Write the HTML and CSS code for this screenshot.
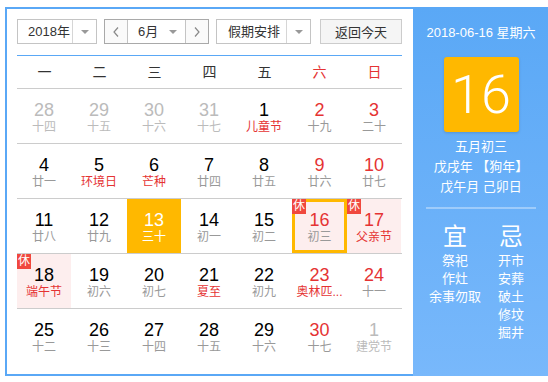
FILE: index.html
```html
<!DOCTYPE html>
<html lang="zh-CN">
<head>
    <meta charset="UTF-8">
    <title>万年历</title>
    <link rel="stylesheet" href="styles.css">
</head>
<body>

<div class="calendar">
    <div class="cal-main">
        <div class="toolbar">
            <div class="select select-year">
                <span class="select-text">2018年</span>
                <span class="select-arrow"><i class="caret"></i></span>
            </div>
            <div class="month-pick">
                <span class="month-btn">
                    <svg width="6" height="10" viewBox="0 0 6 10"><polyline points="5,0.5 1,5 5,9.5" fill="none" stroke="#888" stroke-width="1.2"/></svg>
                </span>
                <div class="month-sel">
                    <span class="select-text">6月</span>
                    <i class="caret"></i>
                </div>
                <span class="month-btn">
                    <svg width="6" height="10" viewBox="0 0 6 10"><polyline points="1,0.5 5,5 1,9.5" fill="none" stroke="#888" stroke-width="1.2"/></svg>
                </span>
            </div>
            <div class="select select-holiday">
                <span class="select-text">假期安排</span>
                <span class="select-arrow"><i class="caret"></i></span>
            </div>
            <button class="today-btn">返回今天</button>
        </div>

        <div class="week-head">
            <span>一</span><span>二</span><span>三</span><span>四</span><span>五</span>
            <span class="weekend">六</span><span class="weekend">日</span>
        </div>

        <div class="days" id="days">
            <script>
                // day, lunar text, extra classes
                let days = [
                    ["28", "十四", "other"], ["29", "十五", "other"], ["30", "十六", "other"], ["31", "十七", "other"],
                    ["1", "儿童节", "fest"], ["2", "十九", "weekend"], ["3", "二十", "weekend"],
                    ["4", "廿一", ""], ["5", "环境日", "fest"], ["6", "芒种", "fest"], ["7", "廿四", ""],
                    ["8", "廿五", ""], ["9", "廿六", "weekend"], ["10", "廿七", "weekend"],
                    ["11", "廿八", ""], ["12", "廿九", ""], ["13", "三十", "today"], ["14", "初一", ""],
                    ["15", "初二", ""], ["16", "初三", "weekend selected rest"], ["17", "父亲节", "weekend fest rest"],
                    ["18", "端午节", "fest rest"], ["19", "初六", ""], ["20", "初七", ""], ["21", "夏至", "fest"],
                    ["22", "初九", ""], ["23", "奥林匹...", "weekend fest"], ["24", "十一", "weekend"],
                    ["25", "十二", ""], ["26", "十三", ""], ["27", "十四", ""], ["28", "十五", ""],
                    ["29", "十六", ""], ["30", "十七", "weekend"], ["1", "建党节", "other"]
                ];
                days.forEach((d, i) => {
                    let row = Math.floor(i / 7);
                    let cls = "day" + (d[2] ? " " + d[2] : "") + (row === 4 ? " last-row" : "");
                    let badge = d[2].indexOf("rest") >= 0 ? '<span class="badge">休</span>' : "";
                    document.write(`
                        <div class="${cls}">
                            <div class="day-box">
                                ${badge}
                                <div class="day-num">${d[0]}</div>
                                <div class="day-lunar">${d[1]}</div>
                            </div>
                        </div>
                    `);
                });
            </script>
        </div>
    </div>

    <div class="cal-side">
        <div class="side-date">2018-06-16 星期六</div>
        <div class="side-big">16</div>
        <div class="side-line">五月初三</div>
        <div class="side-line">戊戌年 【狗年】</div>
        <div class="side-line">戊午月 己卯日</div>
        <div class="side-sep"></div>
        <div class="side-yiji">
            <div class="yiji-col">
                <div class="yiji-title">宜</div>
                <div>祭祀</div>
                <div>作灶</div>
                <div>余事勿取</div>
            </div>
            <div class="yiji-col">
                <div class="yiji-title">忌</div>
                <div>开市</div>
                <div>安葬</div>
                <div>破土</div>
                <div>修坟</div>
                <div>掘井</div>
            </div>
        </div>
    </div>
</div>

</body>
</html>
```

FILE: styles.css
```css
* {
    box-sizing: border-box;
}
body {
    margin: 0;
    font-family: 'Liberation Sans', 'Noto Sans CJK SC', sans-serif;
    color: #333;
    background: #fff;
}
.calendar {
    display: flex;
    width: 538px;
    height: 369px;
    margin: 7px 0 0 5px;
    border: 2px solid #5aa8f6;
}
.cal-main {
    width: 406px;
    flex: none;
    padding: 10px 11px 0 10px;
}
.toolbar {
    display: flex;
    height: 25px;
    margin-bottom: 11px;
    font-size: 13px;
}
.toolbar > * {
    flex: none;
}
.select {
    display: flex;
    height: 25px;
    border: 1px solid #c4c4c4;
    background: #fff;
}
.select-text {
    flex: 1;
    line-height: 23px;
    padding-left: 10px;
    color: #333;
    white-space: nowrap;
}
.select-year {
    width: 80px;
}
.select-holiday {
    width: 95px;
    margin-left: 7px;
}
.select-holiday .select-text {
    padding-left: 11px;
}
.select-arrow {
    flex: none;
    width: 24px;
    display: flex;
    align-items: center;
    justify-content: center;
    border-left: 1px solid #d6d6d6;
}
.caret {
    display: block;
    flex: none;
    width: 0;
    height: 0;
    border-left: 4px solid transparent;
    border-right: 4px solid transparent;
    border-top: 4px solid #999;
}
.month-pick {
    display: flex;
    width: 105px;
    height: 25px;
    margin-left: 7px;
    border: 1px solid #a9a9a9;
}
.month-btn {
    flex: none;
    width: 22px;
    display: flex;
    align-items: center;
    justify-content: center;
    background: #fafafa;
}
.month-sel {
    flex: none;
    display: flex;
    align-items: center;
    width: 59px;
    padding-right: 8px;
    border-left: 1px solid #c4c4c4;
    border-right: 1px solid #c4c4c4;
    background: #fff;
}
.today-btn {
    margin-left: auto;
    width: 82px;
    height: 25px;
    padding: 0;
    font-family: inherit;
    font-size: 13px;
    color: #333;
    background: #f5f5f5;
    border: 1px solid #ccc;
}
.week-head {
    display: grid;
    grid-template-columns: repeat(7, 1fr);
    height: 34px;
    border-top: 1px solid #5aa8f6;
    border-bottom: 1px solid #ccc;
    font-size: 14px;
    line-height: 32px;
    text-align: center;
    color: #333;
}
.week-head .weekend {
    color: #e53333;
}
.days {
    display: grid;
    grid-template-columns: repeat(7, 1fr);
}
.day {
    height: 55px;
    border-bottom: 1px solid #ccc;
}
.day.last-row {
    border-bottom: none;
}
.day-box {
    position: relative;
    height: 54px;
    margin-right: 1px;
    padding-top: 11px;
    text-align: center;
}
.day:nth-child(7n) .day-box {
    margin-right: 0;
}
.day-num {
    font-size: 18px;
    line-height: 20px;
    color: #000;
}
.day-lunar {
    font-size: 12px;
    line-height: 15px;
    color: #999;
    white-space: nowrap;
}
.weekend .day-num {
    color: #e53333;
}
.fest .day-lunar {
    color: #e53333;
}
.other .day-num,
.other .day-lunar {
    color: #bbb;
}
.rest .day-box {
    background: #fdeeee;
}
.today .day-box {
    background: #ffb800;
}
.today .day-num,
.today .day-lunar {
    color: #fff;
}
.selected .day-box {
    border: 3px solid #ffb800;
    padding-top: 8px;
}
.badge {
    position: absolute;
    top: 0;
    left: 0;
    width: 14px;
    height: 15px;
    font-size: 12px;
    line-height: 15px;
    text-align: center;
    color: #fff;
    background: #f0483e;
}
.selected .badge {
    top: -3px;
    left: -3px;
}
.cal-side {
    flex: 1;
    display: flex;
    flex-direction: column;
    align-items: center;
    margin: -2px -2px -2px 0;
    padding: 16px 10px 0;
    color: #fff;
    background: linear-gradient(180deg, #5aa8f6, #78b8fb);
}
.side-date {
    font-size: 13px;
    line-height: 20px;
}
.side-big {
    width: 75px;
    height: 75px;
    margin-top: 14px;
    margin-bottom: 5px;
    font-family: Roboto, 'Liberation Sans', sans-serif;
    font-weight: 300;
    font-size: 54px;
    line-height: 75px;
    text-align: center;
    background: #ffb800;
    border-radius: 3px;
    box-shadow: 0 1px 3px rgba(0, 0, 0, 0.15);
}
.side-line {
    font-size: 13px;
    line-height: 20px;
}
.side-sep {
    width: 110px;
    height: 2px;
    margin-top: 10px;
    background: rgba(255, 255, 255, 0.35);
}
.side-yiji {
    display: flex;
    margin-top: 13px;
    margin-left: 4px;
}
.yiji-col {
    width: 56px;
    text-align: center;
    font-size: 13px;
    line-height: 18px;
}
.yiji-title {
    font-size: 24px;
    line-height: 30px;
}
```
